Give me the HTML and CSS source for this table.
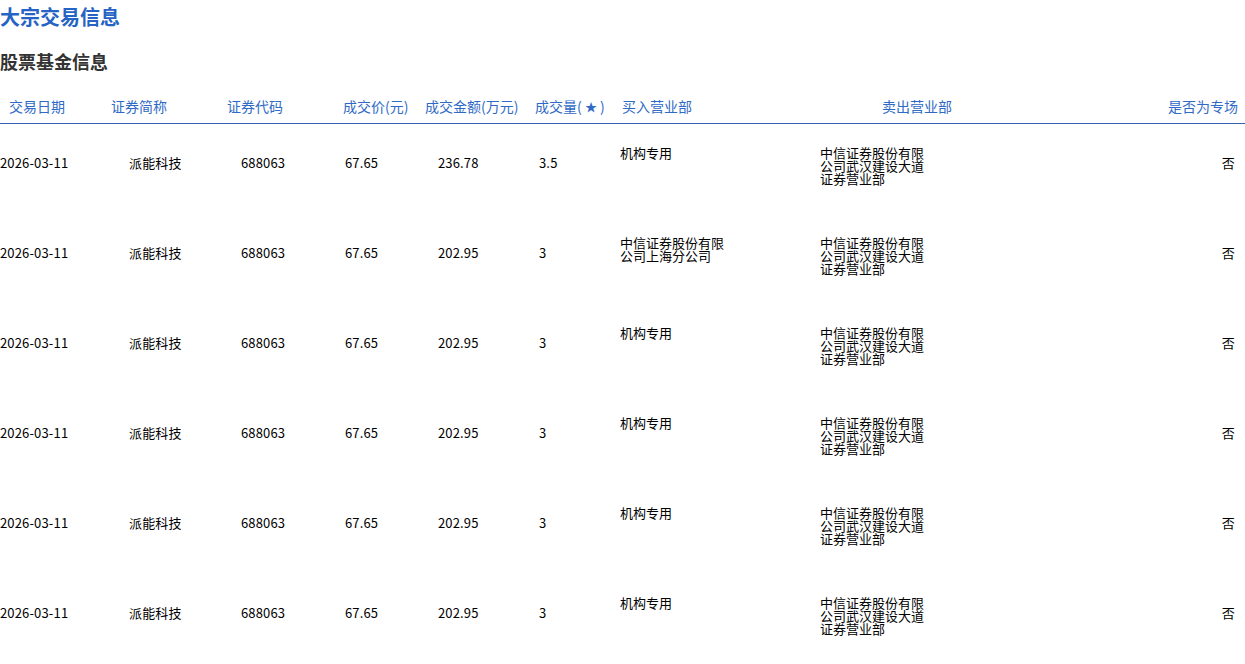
FILE: index.html
```html
<!DOCTYPE html>
<html lang="zh-CN">
<head>
<meta charset="utf-8">
<title>大宗交易信息</title>
<link rel="stylesheet" href="styles.css">
</head>
<body>
<h1 class="title">大宗交易信息</h1>
<h2 class="subtitle">股票基金信息</h2>
<div class="table">
  <div class="thead">
    <div>交易日期</div>
    <div>证券简称</div>
    <div>证券代码</div>
    <div>成交价(元)</div>
    <div>成交金额(万元)</div>
    <div>成交量( <span class="star">★</span>)</div>
    <div>买入营业部</div>
    <div>卖出营业部</div>
    <div class="right">是否为专场</div>
  </div>
  <div class="row">
    <div class="cell">2026-03-11</div>
    <div class="cell">派能科技</div>
    <div class="cell">688063</div>
    <div class="cell">67.65</div>
    <div class="cell">236.78</div>
    <div class="cell">3.5</div>
    <div class="dept">机构专用</div>
    <div class="dept">中信证券股份有限公司武汉建设大道证券营业部</div>
    <div class="cell right">否</div>
  </div>
  <div class="row">
    <div class="cell">2026-03-11</div>
    <div class="cell">派能科技</div>
    <div class="cell">688063</div>
    <div class="cell">67.65</div>
    <div class="cell">202.95</div>
    <div class="cell">3</div>
    <div class="dept">中信证券股份有限公司上海分公司</div>
    <div class="dept">中信证券股份有限公司武汉建设大道证券营业部</div>
    <div class="cell right">否</div>
  </div>
  <div class="row">
    <div class="cell">2026-03-11</div>
    <div class="cell">派能科技</div>
    <div class="cell">688063</div>
    <div class="cell">67.65</div>
    <div class="cell">202.95</div>
    <div class="cell">3</div>
    <div class="dept">机构专用</div>
    <div class="dept">中信证券股份有限公司武汉建设大道证券营业部</div>
    <div class="cell right">否</div>
  </div>
  <div class="row">
    <div class="cell">2026-03-11</div>
    <div class="cell">派能科技</div>
    <div class="cell">688063</div>
    <div class="cell">67.65</div>
    <div class="cell">202.95</div>
    <div class="cell">3</div>
    <div class="dept">机构专用</div>
    <div class="dept">中信证券股份有限公司武汉建设大道证券营业部</div>
    <div class="cell right">否</div>
  </div>
  <div class="row">
    <div class="cell">2026-03-11</div>
    <div class="cell">派能科技</div>
    <div class="cell">688063</div>
    <div class="cell">67.65</div>
    <div class="cell">202.95</div>
    <div class="cell">3</div>
    <div class="dept">机构专用</div>
    <div class="dept">中信证券股份有限公司武汉建设大道证券营业部</div>
    <div class="cell right">否</div>
  </div>
  <div class="row">
    <div class="cell">2026-03-11</div>
    <div class="cell">派能科技</div>
    <div class="cell">688063</div>
    <div class="cell">67.65</div>
    <div class="cell">202.95</div>
    <div class="cell">3</div>
    <div class="dept">机构专用</div>
    <div class="dept">中信证券股份有限公司武汉建设大道证券营业部</div>
    <div class="cell right">否</div>
  </div>
</div>
</body>
</html>
```

FILE: styles.css
```css
html, body {
  margin: 0;
  padding: 0;
  background: #fff;
  overflow: hidden;
}
body {
  font-family: "Noto Sans CJK SC", "Noto Sans", sans-serif;
  color: #000;
}
.title {
  margin: 0;
  font-size: 20px;
  line-height: 34px;
  font-weight: 700;
  color: #2563c4;
}
.subtitle {
  margin: 14px 0 0;
  font-size: 18px;
  line-height: 26px;
  font-weight: 700;
  color: #333;
}
.table {
  margin-top: 16px;
}
.thead {
  display: grid;
  grid-template-columns: 102px 116px 116px 82px 110px 87px 260px 286px 1fr;
  padding: 0 8px 0 9px;
  height: 33px;
  line-height: 32px;
  font-size: 14px;
  color: #2f6ac6;
  border-bottom: 1px solid #3565b3;
  white-space: nowrap;
}
.star {
  font-size: 12px;
  margin-right: 3px;
}
.row {
  display: grid;
  grid-template-columns: 129px 112px 104px 93px 101px 81px 200px 1fr auto;
  padding-right: 10px;
  height: 90px;
  font-size: 13px;
}
.cell {
  padding-top: 29px;
  line-height: 20px;
  white-space: nowrap;
  letter-spacing: 0.15px;
}
.dept {
  padding-top: 22px;
  line-height: 13px;
  width: 110px;
}
.right {
  text-align: right;
}
```
